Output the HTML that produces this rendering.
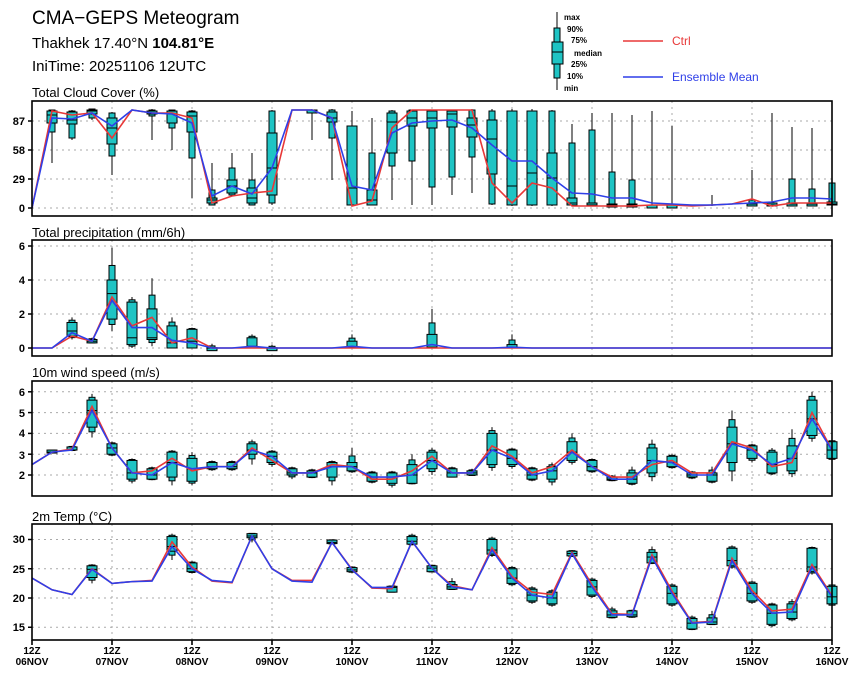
<!DOCTYPE html>
<html><head><meta charset="utf-8"><style>
html,body{margin:0;padding:0;background:#fff;width:860px;height:678px;overflow:hidden}
svg{display:block;font-family:"Liberation Sans",sans-serif}
.t{font-size:13px}
.ax{font-size:11px;font-weight:bold;text-anchor:end}
.xl{font-size:10px;font-weight:bold;text-anchor:middle}
.lg{font-size:8px;font-weight:bold}
</style></head><body>
<svg id="s" width="860" height="678" viewBox="0 0 860 678">
<text x="32" y="24" font-size="19">CMA−GEPS Meteogram</text>
<text x="32" y="48" font-size="15">Thakhek 17.40°N <tspan font-weight="bold">104.81°E</tspan></text>
<text x="32" y="71" font-size="15">IniTime: 20251106 12UTC</text>
<text class="t" x="32" y="97">Total Cloud Cover (%)</text>
<text class="t" x="32" y="237">Total precipitation (mm/6h)</text>
<text class="t" x="32" y="377">10m wind speed (m/s)</text>
<text class="t" x="32" y="521">2m Temp (°C)</text>
<line x1="557" y1="12" x2="557" y2="90" stroke="#000" stroke-width="1"/>
<rect x="554" y="28" width="6" height="50" fill="#1fc4c4" stroke="#000"/>
<rect x="552" y="42" width="11" height="22" fill="#1fc4c4" stroke="#000"/>
<line x1="552" y1="52" x2="563" y2="52" stroke="#000"/>
<text class="lg" x="564" y="20">max</text>
<text class="lg" x="567" y="32">90%</text>
<text class="lg" x="571" y="43">75%</text>
<text class="lg" x="574" y="56">median</text>
<text class="lg" x="571" y="67">25%</text>
<text class="lg" x="567" y="79">10%</text>
<text class="lg" x="564" y="91">min</text>
<line x1="623" y1="41" x2="663" y2="41" stroke="#e83838" stroke-width="1.5"/>
<text x="672" y="45" font-size="12" fill="#e83838">Ctrl</text>
<line x1="623" y1="77" x2="663" y2="77" stroke="#2f3fe8" stroke-width="1.5"/>
<text x="672" y="81" font-size="12" fill="#2f3fe8">Ensemble Mean</text>
<text class="ax" x="25" y="125">87</text><text class="ax" x="25" y="154">58</text><text class="ax" x="25" y="183">29</text><text class="ax" x="25" y="212">0</text>
<text class="ax" x="25" y="250">6</text><text class="ax" x="25" y="284">4</text><text class="ax" x="25" y="318">2</text><text class="ax" x="25" y="352">0</text>
<text class="ax" x="25" y="396">6</text><text class="ax" x="25" y="417">5</text><text class="ax" x="25" y="437">4</text><text class="ax" x="25" y="459">3</text><text class="ax" x="25" y="479">2</text>
<text class="ax" x="25" y="543">30</text><text class="ax" x="25" y="573">25</text><text class="ax" x="25" y="602">20</text><text class="ax" x="25" y="631">15</text>
<g class="xl">
<text x="32" y="654">12Z</text><text x="32" y="665">06NOV</text>
<text x="112" y="654">12Z</text><text x="112" y="665">07NOV</text>
<text x="192" y="654">12Z</text><text x="192" y="665">08NOV</text>
<text x="272" y="654">12Z</text><text x="272" y="665">09NOV</text>
<text x="352" y="654">12Z</text><text x="352" y="665">10NOV</text>
<text x="432" y="654">12Z</text><text x="432" y="665">11NOV</text>
<text x="512" y="654">12Z</text><text x="512" y="665">12NOV</text>
<text x="592" y="654">12Z</text><text x="592" y="665">13NOV</text>
<text x="672" y="654">12Z</text><text x="672" y="665">14NOV</text>
<text x="752" y="654">12Z</text><text x="752" y="665">15NOV</text>
<text x="832" y="654">12Z</text><text x="832" y="665">16NOV</text>
</g>
</svg>
<script>
var S=document.getElementById('s'),NS='http://www.w3.org/2000/svg';
function el(n,a){var e=document.createElementNS(NS,n);for(var k in a)e.setAttribute(k,a[k]);S.appendChild(e);return e;}
function X(i){return 32+20*i;}
function panel(top,bot,yf,ticks,mean,ctrl,boxes){
  for(var d=1;d<10;d++)el('line',{x1:32+80*d,y1:top,x2:32+80*d,y2:bot,stroke:'#aaa','stroke-dasharray':'2,4','stroke-width':1});
  ticks.forEach(function(v){var y=yf(v);el('line',{x1:32,y1:y,x2:832,y2:y,stroke:'#aaa','stroke-dasharray':'2,4','stroke-width':1});el('line',{x1:28,y1:y,x2:32,y2:y,stroke:'#000','stroke-width':1.5});});
  boxes.forEach(function(b){var i=b[0],x=X(i),mn,p10,lo,hi,p90,mx,md;
    if(b.length>=7){mn=b[1];p10=b[2];lo=b[3];hi=b[4];p90=b[5];mx=b[6];md=b[7];}
    else{mn=b[1];lo=b[2];hi=b[3];mx=b[4];md=b[5];p10=lo-(lo-mn)*0.45;p90=hi+(mx-hi)*0.45;}
    if(md===undefined)md=mean[i];
    el('line',{x1:x,y1:yf(mx),x2:x,y2:yf(mn),stroke:'#000','stroke-width':1});
    if(p90>p10||b.length<7)el('rect',{x:x-3,y:yf(p90),width:6,height:Math.max(2,yf(p10)-yf(p90)),fill:'#1fc4c4',stroke:'#000','stroke-width':1});
    if(hi>lo||b.length<7)el('rect',{x:x-5,y:yf(hi),width:10,height:Math.max(3,yf(lo)-yf(hi)),fill:'#1fc4c4',stroke:'#000','stroke-width':1});
    if(hi>lo||b.length<7)el('line',{x1:x-5,y1:yf(md),x2:x+5,y2:yf(md),stroke:'#000','stroke-width':1});
  });
  function pl(a,c){el('polyline',{points:a.map(function(v,i){return X(i)+','+yf(v)}).join(' '),fill:'none',stroke:c,'stroke-width':1.6});}
  pl(ctrl,'#e83838');pl(mean,'#2f3fe8');
  el('rect',{x:32,y:top,width:800,height:bot-top,fill:'none',stroke:'#000','stroke-width':1.6});
}
var cm=[0,90,89,95,82,98,95,94,85,12,22,14,40,98,98,90,22,18,75,85,87,88,80,63,47,47,30,15,14,10,10,5,4,3,3,4,5,6,10,10,9];
var cc=[0,97,93,95,70,98,95,95,90,5,12,15,17,98,98,90,2,7,80,98,98,98,98,25,5,25,20,2,2,2,2,3,3,2,3,4,9,2,5,5,5];
var cb=[[1,45,76,85,97,98,98,93],[2,68,70,84,96,97,98,88],[3,88,90,94,98,99,99,97],[4,33,52,64,90,95,96,80],[6,68,92,94,97,98,99,97],[7,58,80,85,97,98,98,94],[8,10,50,76,96,97,98,92],[9,3,3,5,10,18,45,8],[10,12,13,15,28,40,55,22],[11,3,3,5,20,28,55,10],[12,3,5,13,75,97,98,40],[14,68,97,97,98,98,99,98],[15,28,70,86,96,98,99,90],[16,2,3,3,82,82,97,20],[17,3,3,3,18,55,90,8],[18,8,42,55,95,97,98,86],[19,3,47,82,97,98,98,90],[20,3,21,80,97,98,98,90],[21,13,31,81,97,98,98,94],[22,15,51,71,90,98,99,83],[23,3,4,34,88,97,99,69],[24,2,3,3,97,97,99,22],[25,2,3,3,97,97,99,35],[26,2,3,3,55,97,98,30],[27,2,3,3,10,65,84,5],[28,2,3,3,5,78,95,3],[29,2,3,3,4,36,95,3],[30,2,3,3,4,28,93,3],[31,2,2,2,3,3,97,3],[32,2,2,2,3,3,82,3],[34,2,2,2,2,2,13,2],[36,2,2,2,5,8,38,4],[37,2,2,2,5,5,95,3],[38,2,3,3,5,29,81,4],[39,2,3,3,5,19,80,4],[40,2,3,3,6,25,30,4]];
panel(101,216,function(v){return 208-v},[0,29,58,87],cm,cc,cb);
var pm=[0,0,0.9,0.4,2.8,1.2,1.2,0.45,0.3,0,0,0.1,0,0,0,0,0.1,0,0,0,0.2,0,0,0,0.05,0,0,0,0,0,0,0,0,0,0,0,0,0,0,0,0];
var pc=[0,0,0.7,0.4,3.0,1.3,1.8,0.3,0.6,0,0,0,0,0,0,0,0,0,0,0,0,0,0,0,0,0,0,0,0,0,0,0,0,0,0,0,0,0,0,0,0];
var pb=[[2,0.5,0.7,1.5,1.8,1.0],[3,0.3,0.3,0.5,0.6],[4,1.0,1.7,4.0,5.9,3.2],[5,0,0.2,2.7,3.0,0.6],[6,0.1,0.5,2.3,4.1,0.6],[7,0,0,1.3,1.8,0.3],[8,0,0,1.1,1.2,0.4],[9,0,0,0.02,0.25],[11,0,0,0.6,0.8,0.1],[12,0,0,0.02,0.2],[16,0,0,0.4,0.8,0.05],[20,0,0,0.8,2.3,0.05],[24,0,0,0.2,0.8,0.02]];
panel(240,356,function(v){return 348-17*v},[0,2,4,6],pm,pc,pb);
var wm=[2.5,3.1,3.2,5.1,3.3,2.1,2.0,2.6,2.3,2.4,2.4,3.2,2.9,2.1,2.1,2.4,2.4,1.9,1.9,2.0,2.7,2.1,2.1,3.2,2.8,2.0,2.2,3.1,2.4,1.8,1.8,2.7,2.6,2.0,2.0,3.5,3.2,2.5,2.8,4.7,3.2];
var wc=[2.5,3.1,3.25,5.3,3.3,2.1,2.2,2.8,2.2,2.4,2.4,3.3,2.7,2.1,2.1,2.5,2.4,1.8,1.8,2.2,2.9,2.1,2.1,3.4,2.9,2.1,2.4,3.2,2.4,1.9,1.9,2.5,2.7,2.1,2.1,3.6,3.3,2.4,2.6,5.0,3.2];
var wb=[[1,3.05,3.1,3.2,3.2],[2,3.15,3.2,3.35,3.4],[3,3.8,4.3,5.6,5.9],[4,2.9,3.0,3.5,3.6],[5,1.6,1.8,2.7,2.8],[6,1.75,1.8,2.3,2.4],[7,1.5,1.9,3.1,3.2],[8,1.5,1.7,2.8,3.1],[9,2.2,2.3,2.6,2.7],[10,2.2,2.3,2.6,2.7],[11,2.5,3.0,3.5,3.7],[12,2.4,2.6,3.1,3.2],[13,1.8,2.0,2.3,2.4],[14,1.85,1.9,2.2,2.3],[15,1.5,1.9,2.6,2.7],[16,2.1,2.2,2.6,3.3],[17,1.6,1.7,2.1,2.2],[18,1.4,1.6,2.1,2.2],[19,1.55,1.6,2.5,3.0],[20,2.0,2.3,3.1,3.3],[21,1.9,1.9,2.3,2.4],[22,1.95,2.0,2.2,2.3],[23,2.2,2.5,4.0,4.3],[24,2.3,2.5,3.2,3.3],[25,1.7,1.8,2.3,2.4],[26,1.5,1.8,2.4,2.6],[27,2.5,2.7,3.6,4.0],[28,2.1,2.2,2.7,2.8],[29,1.7,1.75,1.9,2.0],[30,1.5,1.6,2.1,2.4],[31,1.7,2.1,3.3,3.7],[32,2.3,2.4,2.9,3.0],[33,1.8,1.9,2.1,2.2],[34,1.6,1.7,2.1,2.4],[35,1.7,2.6,4.3,5.1],[36,2.6,2.8,3.4,3.5],[37,2.0,2.1,3.1,3.3],[38,1.9,2.2,3.4,4.2],[39,3.6,3.9,5.6,6.0],[40,2.7,2.8,3.6,3.7]];
panel(381,496,function(v){return 475-20.8*(v-2)},[2,3,4,5,6],wm,wc,wb);
var tm=[23.4,21.4,20.6,24.9,22.5,22.8,22.9,28.8,25.0,23.0,22.7,30.6,25.0,22.9,22.7,29.5,24.8,21.8,21.8,29.7,25.1,21.9,21.4,28.2,23.4,20.5,20.0,27.6,21.9,17.1,17.1,27.0,20.8,15.7,15.9,26.4,20.8,17.4,17.6,25.3,20.2];
var tc=[23.4,21.4,20.6,25.0,22.5,22.8,23.0,29.6,25.3,22.9,22.6,30.6,25.0,23.0,23.0,29.5,24.9,21.7,21.6,29.7,25.1,22.1,21.4,28.6,23.7,21.0,20.6,27.8,22.3,17.3,17.2,27.4,21.2,15.8,16.0,26.8,21.3,17.8,18.1,25.7,20.4];
var tb=[[3,22.5,23.5,25.5,25.8],[7,26.5,28.0,30.5,31.0],[8,24.2,24.5,26.0,26.3],[11,29.5,30.3,31.0,31.1],[15,29.2,29.3,29.9,30.0],[16,24.3,24.5,25.2,25.4],[18,21.0,21.0,22.0,22.1],[19,29.0,29.2,30.5,31.0],[20,24.4,24.5,25.5,25.7],[21,21.4,21.5,22.3,23.4],[23,27.0,27.5,30.0,30.5],[24,22.0,22.5,25.0,25.5],[25,19.0,19.5,21.5,22.0],[26,18.5,19.0,21.0,21.5],[27,27.0,27.2,28.0,28.2],[28,20.0,20.5,23.0,23.5],[29,16.5,16.7,17.8,18.5],[30,16.6,16.8,17.8,18.0],[31,25.8,26.0,27.8,28.8],[32,18.5,19.0,22.0,22.5],[33,14.5,14.7,16.5,17.0],[34,15.4,15.5,16.6,17.8],[35,25.0,25.5,28.5,29.0],[36,19.0,19.5,22.5,23.0],[37,15.0,15.5,18.8,19.2],[38,16.0,16.5,19.0,19.8],[39,24.0,24.5,28.5,28.8],[40,18.5,19.0,22.0,22.5]];
panel(524,640,function(v){return 598-5.85*(v-20)},[15,20,25,30],tm,tc,tb);
for(var d=0;d<=10;d++)el('line',{x1:32+80*d,y1:640,x2:32+80*d,y2:645,stroke:'#000','stroke-width':1.6});
</script>
</body></html>
